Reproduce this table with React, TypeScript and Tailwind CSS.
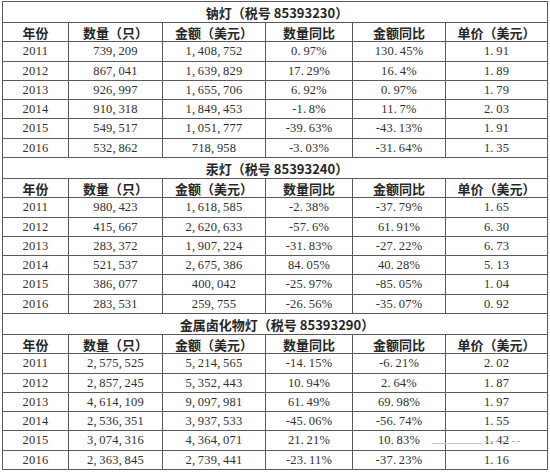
import React from "react";

type Row = [string, string, string, string, string, string];

const sections: { title: string; rows: Row[] }[] = [
  {
    title: "钠灯（税号 85393230）",
    rows: [
      ["2011", "739,209", "1,408,752", "0.97%", "130.45%", "1.91"],
      ["2012", "867,041", "1,639,829", "17.29%", "16.4%", "1.89"],
      ["2013", "926,997", "1,655,706", "6.92%", "0.97%", "1.79"],
      ["2014", "910,318", "1,849,453", "-1.8%", "11.7%", "2.03"],
      ["2015", "549,517", "1,051,777", "-39.63%", "-43.13%", "1.91"],
      ["2016", "532,862", "718,958", "-3.03%", "-31.64%", "1.35"],
    ],
  },
  {
    title: "汞灯（税号 85393240）",
    rows: [
      ["2011", "980,423", "1,618,585", "-2.38%", "-37.79%", "1.65"],
      ["2012", "415,667", "2,620,633", "-57.6%", "61.91%", "6.30"],
      ["2013", "283,372", "1,907,224", "-31.83%", "-27.22%", "6.73"],
      ["2014", "521,537", "2,675,386", "84.05%", "40.28%", "5.13"],
      ["2015", "386,077", "400,042", "-25.97%", "-85.05%", "1.04"],
      ["2016", "283,531", "259,755", "-26.56%", "-35.07%", "0.92"],
    ],
  },
  {
    title: "金属卤化物灯（税号 85393290）",
    rows: [
      ["2011", "2,575,525", "5,214,565", "-14.15%", "-6.21%", "2.02"],
      ["2012", "2,857,245", "5,352,443", "10.94%", "2.64%", "1.87"],
      ["2013", "4,614,109", "9,097,981", "61.49%", "69.98%", "1.97"],
      ["2014", "2,536,351", "3,937,533", "-45.06%", "-56.74%", "1.55"],
      ["2015", "3,074,316", "4,364,071", "21.21%", "10.83%", "1.42"],
      ["2016", "2,363,845", "2,739,441", "-23.11%", "-37.23%", "1.16"],
    ],
  },
];

const headers = ["年份", "数量（只）", "金额（美元）", "数量同比", "金额同比", "单价（美元）"];
const rowHeights = ["h-[20px]", "h-[19px]", "h-[19px]", "h-[19px]", "h-[20px]", "h-[19px]"];

function Num({ v }: { v: string }) {
  const parts = v.split(/([,.])/);
  return (
    <span>
      {parts.map((p, i) =>
        p === "," || p === "." ? (
          <span key={i} className="mr-[2.5px]">
            {p}
          </span>
        ) : (
          <span key={i}>{p}</span>
        )
      )}
    </span>
  );
}

export default function App() {
  return (
    <div className="w-[550px] h-[472px] bg-white overflow-hidden pt-[1px] pl-[2px] relative">
      <div className="w-[546px] border-l border-t border-[#5a5a5a] grid grid-cols-[66px_94px_103px_87px_93px_102px] text-[#262626]">
        {sections.map((s) => (
          <React.Fragment key={s.title}>
            <div className="col-span-6 h-[21px] border-r border-b border-[#5a5a5a] flex items-center justify-center font-['Noto_Sans_CJK_SC',sans-serif] font-bold text-[13px] leading-none pl-[4px]">
              {s.title}
            </div>
            {headers.map((h) => (
              <div
                key={h}
                className="h-[19px] border-r border-b border-[#5a5a5a] flex items-center justify-center font-['Noto_Sans_CJK_SC',sans-serif] font-bold text-[13px] leading-none"
              >
                {h}
              </div>
            ))}
            {s.rows.map((r, ri) =>
              r.map((c, ci) => (
                <div
                  key={ri + "-" + ci}
                  className={
                    rowHeights[ri] +
                    " border-r border-b border-[#5a5a5a] flex items-center justify-center font-['Liberation_Serif','Noto_Sans_CJK_SC',serif] text-[12.5px] tracking-[0.2px] leading-none text-[#303030]"
                  }
                >
                  <Num v={c} />
                </div>
              ))
            )}
          </React.Fragment>
        ))}
      </div>
      <div className="absolute left-[432px] top-[443px] w-[50px] h-px bg-[#c8c8c8]" />
      <div className="absolute left-[485px] top-[441px] w-[35px] h-px border-t border-dashed border-[#b0b0b0]" />
    </div>
  );
}
